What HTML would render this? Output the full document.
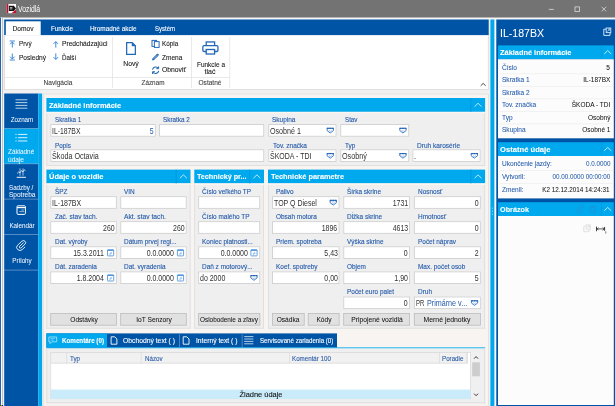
<!DOCTYPE html>
<html><head><meta charset="utf-8"><title>Vozidlá</title>
<style>
html,body{margin:0;padding:0;}
body{filter:blur(0.3px);width:615px;height:406px;position:relative;overflow:hidden;background:#f0f0f0;font-family:"Liberation Sans",sans-serif;}
body>div{position:absolute;white-space:nowrap;}
body>svg{position:absolute;left:0;top:0;display:block;}
</style></head><body>
<svg width="615" height="406" viewBox="0 0 615 406">
<rect x="0" y="0" width="615" height="406" fill="#f0f0f0"/>
<rect x="0" y="0" width="615" height="17.7" fill="#737373"/>
<rect x="0" y="17.7" width="615" height="1.8" fill="#f6f6f6"/>
<rect x="0" y="17.7" width="1" height="389" fill="#1f63b0"/>
<rect x="1" y="17.7" width="1" height="389" fill="#fafafa"/>
<rect x="2" y="17.7" width="1.3" height="389" fill="#c6c2bf"/>
<rect x="3.3" y="17.7" width="1" height="389" fill="#f6f6f6"/>
<g transform="translate(6.8 4)"><rect x="0" y="0" width="9.2" height="9.2" fill="#fff"/><rect x="0" y="0" width="1.5" height="9.2" fill="#c8102e"/><path d="M2 1.8h5l2.2 2.6-2.2 2.6H2z" fill="#111"/><path d="M4.6 9.2l4.6-3.8v3.8z" fill="#c8102e"/><path d="M3 3.6h2.6M3 4.9h2.6" stroke="#fff" stroke-width="0.7"/></g>
<g transform="translate(546 4)"><path d="M2.8 5.4h5" stroke="#dcdcdc" stroke-width="0.8"/><rect x="29" y="2.9" width="4.5" height="4.5" fill="none" stroke="#dcdcdc" stroke-width="0.8"/><path d="M55.6 2.8l4.6 4.6m0-4.6l-4.6 4.6" stroke="#dcdcdc" stroke-width="0.8"/></g>
<rect x="4.2" y="19.5" width="484.5" height="15.8" fill="#0054a6"/>
<rect x="4.2" y="35.3" width="484.5" height="54.6" fill="#fff"/>
<rect x="4.2" y="89.1" width="484.5" height="0.8" fill="#d9d9d9"/>
<rect x="4.2" y="35.3" width="0.8" height="54.6" fill="#d9d9d9"/>
<rect x="487.9" y="35.3" width="0.8" height="54.6" fill="#d9d9d9"/>
<rect x="5.8" y="21.3" width="34.9" height="14.2" fill="#fff"/>
<rect x="5" y="77" width="224.5" height="0.8" fill="#e4e4e4"/>
<rect x="112" y="37" width="0.8" height="51" fill="#e4e4e4"/>
<rect x="191" y="37" width="0.8" height="51" fill="#e4e4e4"/>
<rect x="229.4" y="37" width="0.8" height="51" fill="#e4e4e4"/>
<g transform="translate(9.5 40.5)"><g><path d="M0.2 0.5h5.2" stroke="#3584d2" stroke-width="0.95"/><path d="M2.8 7V1.5M0.5 3.8L2.8 1.5l2.3 2.3" fill="none" stroke="#3584d2" stroke-width="0.95"/></g></g>
<g transform="translate(9.5 53.5)"><g transform="rotate(180 2.8 3.5)"><path d="M0.2 0.5h5.2" stroke="#3584d2" stroke-width="0.95"/><path d="M2.8 7V1.5M0.5 3.8L2.8 1.5l2.3 2.3" fill="none" stroke="#3584d2" stroke-width="0.95"/></g></g>
<g transform="translate(53 40.7)"><g><path d="M2.8 6.9V0.9M0.5 3.2L2.8 0.9l2.3 2.3" fill="none" stroke="#3584d2" stroke-width="0.95"/></g></g>
<g transform="translate(53 53.3)"><g transform="rotate(180 2.8 3.5)"><path d="M2.8 6.9V0.9M0.5 3.2L2.8 0.9l2.3 2.3" fill="none" stroke="#3584d2" stroke-width="0.95"/></g></g>
<g transform="translate(126 41.9)"><path d="M0.65 0.65h5.5l3.2 3.2v8.5H0.65z" fill="#fff" stroke="#2368b8" stroke-width="1.25"/><path d="M6 0.6v3.4h3.4z" fill="#2368b8" stroke="#2368b8" stroke-width="0.5"/></g>
<g transform="translate(151.5 39.9)"><rect x="0.5" y="0.5" width="4.6" height="6" fill="none" stroke="#2368b8" stroke-width="1"/><rect x="2.9" y="1.7" width="4.7" height="5.8" fill="#fff" stroke="#2368b8" stroke-width="1"/></g>
<g transform="translate(151.6 52.9)"><path d="M1.9 6.1L6 2" stroke="#2368b8" stroke-width="2.3" stroke-linecap="round"/><path d="M2.2 5.8L5.7 2.3" stroke="#dbe8f6" stroke-width="0.7"/><path d="M0.5 7.5l0.5-1.9 1.4 1.4z" fill="#2368b8"/></g>
<g transform="translate(151.6 65.9)"><path d="M0.9 3.7A3.2 3.2 0 0 1 6.7 2.5M7.1 4.9A3.2 3.2 0 0 1 1.3 6.1" fill="none" stroke="#2368b8" stroke-width="1.1"/><path d="M7 0.5v2.3H4.7M1 8.1V5.8h2.3" fill="none" stroke="#2368b8" stroke-width="1"/></g>
<g transform="translate(202.2 41.3)"><rect x="4" y="0.65" width="8.4" height="3.8" fill="#fff" stroke="#2368b8" stroke-width="1.3"/><rect x="0.65" y="4.4" width="15.1" height="5.8" rx="1.2" fill="#fff" stroke="#2368b8" stroke-width="1.3"/><rect x="4" y="8.2" width="8.4" height="4.5" fill="#fff" stroke="#2368b8" stroke-width="1.3"/></g>
<g transform="translate(480.2 82.5)"><path d="M0.5 3.3L3 0.9l2.5 2.4" fill="none" stroke="#4a4a4a" stroke-width="1"/></g>
<rect x="4.2" y="93.5" width="34.1" height="312.5" fill="#0054a6"/>
<rect x="38.3" y="93.5" width="3.8" height="312.5" fill="#00a9ee"/>
<rect x="4.2" y="128.6" width="34.1" height="35.1" fill="#00a9ee"/>
<rect x="4.2" y="128.2" width="34.1" height="0.8" fill="#fff" opacity="0.42"/>
<rect x="4.2" y="163.4" width="34.1" height="0.8" fill="#fff" opacity="0.42"/>
<rect x="4.2" y="198.7" width="34.1" height="0.8" fill="#fff" opacity="0.42"/>
<rect x="4.2" y="234.2" width="34.1" height="0.8" fill="#fff" opacity="0.42"/>
<rect x="4.2" y="269.7" width="34.1" height="0.8" fill="#fff" opacity="0.42"/>
<g transform="translate(15.5 99.3)"><path d="M0 0.5h11.8M0 3.3h11.8M0 6.1h11.8M0 8.9h11.8" stroke="#fff" stroke-width="0.85" opacity="0.85"/></g>
<g transform="translate(15.1 133.4)"><path d="M3 1h9.2M3 4.3h9.2M3 7.6h9.2" stroke="#fff" stroke-width="1" opacity="0.85"/><path d="M0 1h2M0 4.3h2M0 7.6h2" stroke="#fff" stroke-width="0.9" opacity="0.6"/></g>
<g transform="translate(16.7 168)"><path d="M0 9.3h9.2" stroke="#fff" stroke-width="0.95"/><path d="M3.3 0.4v7.3M6.3 0.4v7.3" stroke="#fff" stroke-width="0.75" opacity="0.85"/><path d="M0.4 5.4l1.7-1.5 1.2 0.9 1.5-2.2 1.5 1.3 1.3-2.1 1.2 0.9" fill="none" stroke="#fff" stroke-width="0.75"/></g>
<g transform="translate(16.4 205)"><rect x="0.6" y="0.8" width="8.4" height="8.6" rx="1" fill="none" stroke="#fff" stroke-width="1"/><path d="M0.6 2.6h8.4" stroke="#fff" stroke-width="1.2"/><path d="M5 5h2.6M3 6.6h4.6" stroke="#fff" stroke-width="0.7" opacity="0.8"/></g>
<g transform="translate(16.3 240.2)"><path d="M7.6 3.2L3.6 7.3a1.1 1.1 0 0 0 1.6 1.6L9 5a2.2 2.2 0 0 0-3.2-3.2L1.6 6.1a3.3 3.3 0 0 0 4.7 4.7L9 8" fill="none" stroke="#fff" stroke-width="1" opacity="0.9" transform="translate(-0.3,-0.6) scale(1,0.92)"/></g>
<rect x="43.2" y="93.6" width="445.8" height="313" fill="#f8f4f1"/>
<rect x="43.65" y="94.05" width="444.9" height="312.1" fill="none" stroke="#e1e1e1" stroke-width="0.9"/>
<rect x="46.4" y="98" width="438.7" height="13.9" fill="#00a9ee"/>
<rect x="46.4" y="111.9" width="438.7" height="54.1" fill="#efefef"/>
<rect x="46.4" y="165.2" width="438.7" height="0.8" fill="#dcdcdc"/>
<rect x="46.4" y="111.9" width="0.8" height="54.1" fill="#dcdcdc"/>
<rect x="484.3" y="111.9" width="0.8" height="54.1" fill="#dcdcdc"/>
<rect x="46.4" y="111.9" width="438.7" height="1.4" fill="#fcf6f2"/>
<rect x="470.1" y="98" width="1.4" height="13.9" fill="#0095d8" opacity="0.55"/>
<g transform="translate(474 102.55)"><path d="M0.5 4.1L4 0.7l3.5 3.4" fill="none" stroke="#c9ecfb" stroke-width="0.95"/></g>
<rect x="50.4" y="124.1" width="105.4" height="12.6" fill="#fff"/>
<rect x="50.85" y="124.55" width="104.5" height="11.7" fill="none" stroke="#cfcfcf" stroke-width="0.9"/>
<rect x="159" y="124.1" width="105.2" height="12.6" fill="#fff"/>
<rect x="159.45" y="124.55" width="104.3" height="11.7" fill="none" stroke="#cfcfcf" stroke-width="0.9"/>
<rect x="268.3" y="124.1" width="68.2" height="12.6" fill="#fff"/>
<rect x="268.75" y="124.55" width="67.3" height="11.7" fill="none" stroke="#cfcfcf" stroke-width="0.9"/>
<g transform="translate(326.6 127.4)"><path d="M0.5 0.9h6.3v2.3L3.65 5.6 0.5 3.2z" fill="#fff" stroke="#2f6fc0" stroke-width="0.9" stroke-linejoin="round"/><path d="M0.2 1h6.9" stroke="#2464b4" stroke-width="1.3" stroke-dasharray="1.9 0.6"/><path d="M2.3 2.9l1.35 1.1 1.35-1.1" fill="none" stroke="#5d93d6" stroke-width="0.6"/></g>
<rect x="340.3" y="124.1" width="68.9" height="12.6" fill="#fff"/>
<rect x="340.75" y="124.55" width="68" height="11.7" fill="none" stroke="#cfcfcf" stroke-width="0.9"/>
<g transform="translate(399.3 127.4)"><path d="M0.5 0.9h6.3v2.3L3.65 5.6 0.5 3.2z" fill="#fff" stroke="#2f6fc0" stroke-width="0.9" stroke-linejoin="round"/><path d="M0.2 1h6.9" stroke="#2464b4" stroke-width="1.3" stroke-dasharray="1.9 0.6"/><path d="M2.3 2.9l1.35 1.1 1.35-1.1" fill="none" stroke="#5d93d6" stroke-width="0.6"/></g>
<rect x="50.4" y="149.3" width="213.8" height="12.6" fill="#fff"/>
<rect x="50.85" y="149.75" width="212.9" height="11.7" fill="none" stroke="#cfcfcf" stroke-width="0.9"/>
<rect x="268.3" y="149.3" width="68.2" height="12.6" fill="#fff"/>
<rect x="268.75" y="149.75" width="67.3" height="11.7" fill="none" stroke="#cfcfcf" stroke-width="0.9"/>
<g transform="translate(326.6 152.6)"><path d="M0.5 0.9h6.3v2.3L3.65 5.6 0.5 3.2z" fill="#fff" stroke="#2f6fc0" stroke-width="0.9" stroke-linejoin="round"/><path d="M0.2 1h6.9" stroke="#2464b4" stroke-width="1.3" stroke-dasharray="1.9 0.6"/><path d="M2.3 2.9l1.35 1.1 1.35-1.1" fill="none" stroke="#5d93d6" stroke-width="0.6"/></g>
<rect x="340.3" y="149.3" width="68.9" height="12.6" fill="#fff"/>
<rect x="340.75" y="149.75" width="68" height="11.7" fill="none" stroke="#cfcfcf" stroke-width="0.9"/>
<g transform="translate(399.3 152.6)"><path d="M0.5 0.9h6.3v2.3L3.65 5.6 0.5 3.2z" fill="#fff" stroke="#2f6fc0" stroke-width="0.9" stroke-linejoin="round"/><path d="M0.2 1h6.9" stroke="#2464b4" stroke-width="1.3" stroke-dasharray="1.9 0.6"/><path d="M2.3 2.9l1.35 1.1 1.35-1.1" fill="none" stroke="#5d93d6" stroke-width="0.6"/></g>
<rect x="412.4" y="149.3" width="68.2" height="12.6" fill="#fff"/>
<rect x="412.85" y="149.75" width="67.3" height="11.7" fill="none" stroke="#cfcfcf" stroke-width="0.9"/>
<g transform="translate(470.7 152.6)"><path d="M0.5 0.9h6.3v2.3L3.65 5.6 0.5 3.2z" fill="#fff" stroke="#2f6fc0" stroke-width="0.9" stroke-linejoin="round"/><path d="M0.2 1h6.9" stroke="#2464b4" stroke-width="1.3" stroke-dasharray="1.9 0.6"/><path d="M2.3 2.9l1.35 1.1 1.35-1.1" fill="none" stroke="#5d93d6" stroke-width="0.6"/></g>
<rect x="46.4" y="169.6" width="144.1" height="13.9" fill="#00a9ee"/>
<rect x="46.4" y="183.5" width="144.1" height="145.1" fill="#efefef"/>
<rect x="46.4" y="327.8" width="144.1" height="0.8" fill="#dcdcdc"/>
<rect x="46.4" y="183.5" width="0.8" height="145.1" fill="#dcdcdc"/>
<rect x="189.7" y="183.5" width="0.8" height="145.1" fill="#dcdcdc"/>
<rect x="46.4" y="183.5" width="144.1" height="1.4" fill="#fcf6f2"/>
<rect x="175.5" y="169.6" width="1.4" height="13.9" fill="#0095d8" opacity="0.55"/>
<g transform="translate(179.4 174.15)"><path d="M0.5 4.1L4 0.7l3.5 3.4" fill="none" stroke="#c9ecfb" stroke-width="0.95"/></g>
<rect x="50.3" y="196.2" width="66.5" height="12.6" fill="#fff"/>
<rect x="50.75" y="196.65" width="65.6" height="11.7" fill="none" stroke="#cfcfcf" stroke-width="0.9"/>
<rect x="120.3" y="196.2" width="66.4" height="12.6" fill="#fff"/>
<rect x="120.75" y="196.65" width="65.5" height="11.7" fill="none" stroke="#cfcfcf" stroke-width="0.9"/>
<rect x="50.3" y="221.2" width="66.5" height="12.6" fill="#fff"/>
<rect x="50.75" y="221.65" width="65.6" height="11.7" fill="none" stroke="#cfcfcf" stroke-width="0.9"/>
<rect x="120.3" y="221.2" width="66.4" height="12.6" fill="#fff"/>
<rect x="120.75" y="221.65" width="65.5" height="11.7" fill="none" stroke="#cfcfcf" stroke-width="0.9"/>
<rect x="50.3" y="246.3" width="66.5" height="12.6" fill="#fff"/>
<rect x="50.75" y="246.75" width="65.6" height="11.7" fill="none" stroke="#cfcfcf" stroke-width="0.9"/>
<g transform="translate(107 248.9)"><rect x="0.5" y="0.8" width="6.2" height="6.2" rx="0.5" fill="#fff" stroke="#5596da" stroke-width="0.9"/><path d="M0.5 1.5h6.2" stroke="#5596da" stroke-width="1.1"/><path d="M2.6 4.6h2.4M3.4 3.5h1.4M2.4 5.7h1.4" stroke="#5596da" stroke-width="0.6" opacity="0.9"/></g>
<rect x="120.3" y="246.3" width="66.4" height="12.6" fill="#fff"/>
<rect x="120.75" y="246.75" width="65.5" height="11.7" fill="none" stroke="#cfcfcf" stroke-width="0.9"/>
<g transform="translate(176.9 248.9)"><rect x="0.5" y="0.8" width="6.2" height="6.2" rx="0.5" fill="#fff" stroke="#5596da" stroke-width="0.9"/><path d="M0.5 1.5h6.2" stroke="#5596da" stroke-width="1.1"/><path d="M2.6 4.6h2.4M3.4 3.5h1.4M2.4 5.7h1.4" stroke="#5596da" stroke-width="0.6" opacity="0.9"/></g>
<rect x="50.3" y="271.4" width="66.5" height="12.6" fill="#fff"/>
<rect x="50.75" y="271.85" width="65.6" height="11.7" fill="none" stroke="#cfcfcf" stroke-width="0.9"/>
<g transform="translate(107 274)"><rect x="0.5" y="0.8" width="6.2" height="6.2" rx="0.5" fill="#fff" stroke="#5596da" stroke-width="0.9"/><path d="M0.5 1.5h6.2" stroke="#5596da" stroke-width="1.1"/><path d="M2.6 4.6h2.4M3.4 3.5h1.4M2.4 5.7h1.4" stroke="#5596da" stroke-width="0.6" opacity="0.9"/></g>
<rect x="120.3" y="271.4" width="66.4" height="12.6" fill="#fff"/>
<rect x="120.75" y="271.85" width="65.5" height="11.7" fill="none" stroke="#cfcfcf" stroke-width="0.9"/>
<g transform="translate(176.9 274)"><rect x="0.5" y="0.8" width="6.2" height="6.2" rx="0.5" fill="#fff" stroke="#5596da" stroke-width="0.9"/><path d="M0.5 1.5h6.2" stroke="#5596da" stroke-width="1.1"/><path d="M2.6 4.6h2.4M3.4 3.5h1.4M2.4 5.7h1.4" stroke="#5596da" stroke-width="0.6" opacity="0.9"/></g>
<rect x="50.3" y="313" width="66.5" height="12.6" fill="#e1e1e1"/>
<rect x="50.7" y="313.4" width="65.7" height="11.8" fill="none" stroke="#bebebe" stroke-width="0.8"/>
<rect x="120.3" y="313" width="66.4" height="12.6" fill="#e1e1e1"/>
<rect x="120.7" y="313.4" width="65.6" height="11.8" fill="none" stroke="#bebebe" stroke-width="0.8"/>
<rect x="194.3" y="169.6" width="69.7" height="13.9" fill="#00a9ee"/>
<rect x="194.3" y="183.5" width="69.7" height="145.1" fill="#efefef"/>
<rect x="194.3" y="327.8" width="69.7" height="0.8" fill="#dcdcdc"/>
<rect x="194.3" y="183.5" width="0.8" height="145.1" fill="#dcdcdc"/>
<rect x="263.2" y="183.5" width="0.8" height="145.1" fill="#dcdcdc"/>
<rect x="194.3" y="183.5" width="69.7" height="1.4" fill="#fcf6f2"/>
<rect x="249" y="169.6" width="1.4" height="13.9" fill="#0095d8" opacity="0.55"/>
<g transform="translate(252.9 174.15)"><path d="M0.5 4.1L4 0.7l3.5 3.4" fill="none" stroke="#c9ecfb" stroke-width="0.95"/></g>
<rect x="198.2" y="196.2" width="62" height="12.6" fill="#fff"/>
<rect x="198.65" y="196.65" width="61.1" height="11.7" fill="none" stroke="#cfcfcf" stroke-width="0.9"/>
<rect x="198.2" y="221.2" width="62" height="12.6" fill="#fff"/>
<rect x="198.65" y="221.65" width="61.1" height="11.7" fill="none" stroke="#cfcfcf" stroke-width="0.9"/>
<rect x="198.2" y="246.3" width="62" height="12.6" fill="#fff"/>
<rect x="198.65" y="246.75" width="61.1" height="11.7" fill="none" stroke="#cfcfcf" stroke-width="0.9"/>
<g transform="translate(250.4 248.9)"><rect x="0.5" y="0.8" width="6.2" height="6.2" rx="0.5" fill="#fff" stroke="#5596da" stroke-width="0.9"/><path d="M0.5 1.5h6.2" stroke="#5596da" stroke-width="1.1"/><path d="M2.6 4.6h2.4M3.4 3.5h1.4M2.4 5.7h1.4" stroke="#5596da" stroke-width="0.6" opacity="0.9"/></g>
<rect x="198.2" y="271.4" width="62" height="12.6" fill="#fff"/>
<rect x="198.65" y="271.85" width="61.1" height="11.7" fill="none" stroke="#cfcfcf" stroke-width="0.9"/>
<g transform="translate(250.3 274.7)"><path d="M0.5 0.9h6.3v2.3L3.65 5.6 0.5 3.2z" fill="#fff" stroke="#2f6fc0" stroke-width="0.9" stroke-linejoin="round"/><path d="M0.2 1h6.9" stroke="#2464b4" stroke-width="1.3" stroke-dasharray="1.9 0.6"/><path d="M2.3 2.9l1.35 1.1 1.35-1.1" fill="none" stroke="#5d93d6" stroke-width="0.6"/></g>
<rect x="198.2" y="313" width="62" height="12.6" fill="#e1e1e1"/>
<rect x="198.6" y="313.4" width="61.2" height="11.8" fill="none" stroke="#bebebe" stroke-width="0.8"/>
<rect x="268" y="169.6" width="217.1" height="13.9" fill="#00a9ee"/>
<rect x="268" y="183.5" width="217.1" height="145.1" fill="#efefef"/>
<rect x="268" y="327.8" width="217.1" height="0.8" fill="#dcdcdc"/>
<rect x="268" y="183.5" width="0.8" height="145.1" fill="#dcdcdc"/>
<rect x="484.3" y="183.5" width="0.8" height="145.1" fill="#dcdcdc"/>
<rect x="268" y="183.5" width="217.1" height="1.4" fill="#fcf6f2"/>
<rect x="470.1" y="169.6" width="1.4" height="13.9" fill="#0095d8" opacity="0.55"/>
<g transform="translate(474 174.15)"><path d="M0.5 4.1L4 0.7l3.5 3.4" fill="none" stroke="#c9ecfb" stroke-width="0.95"/></g>
<rect x="272.1" y="196.2" width="67.4" height="12.6" fill="#fff"/>
<rect x="272.55" y="196.65" width="66.5" height="11.7" fill="none" stroke="#cfcfcf" stroke-width="0.9"/>
<g transform="translate(329.6 199.5)"><path d="M0.5 0.9h6.3v2.3L3.65 5.6 0.5 3.2z" fill="#fff" stroke="#2f6fc0" stroke-width="0.9" stroke-linejoin="round"/><path d="M0.2 1h6.9" stroke="#2464b4" stroke-width="1.3" stroke-dasharray="1.9 0.6"/><path d="M2.3 2.9l1.35 1.1 1.35-1.1" fill="none" stroke="#5d93d6" stroke-width="0.6"/></g>
<rect x="272.1" y="221.2" width="67.4" height="12.6" fill="#fff"/>
<rect x="272.55" y="221.65" width="66.5" height="11.7" fill="none" stroke="#cfcfcf" stroke-width="0.9"/>
<rect x="272.1" y="246.3" width="67.4" height="12.6" fill="#fff"/>
<rect x="272.55" y="246.75" width="66.5" height="11.7" fill="none" stroke="#cfcfcf" stroke-width="0.9"/>
<rect x="272.1" y="271.4" width="67.4" height="12.6" fill="#fff"/>
<rect x="272.55" y="271.85" width="66.5" height="11.7" fill="none" stroke="#cfcfcf" stroke-width="0.9"/>
<rect x="343.3" y="196.2" width="66.7" height="12.6" fill="#fff"/>
<rect x="343.75" y="196.65" width="65.8" height="11.7" fill="none" stroke="#cfcfcf" stroke-width="0.9"/>
<rect x="343.3" y="221.2" width="66.7" height="12.6" fill="#fff"/>
<rect x="343.75" y="221.65" width="65.8" height="11.7" fill="none" stroke="#cfcfcf" stroke-width="0.9"/>
<rect x="343.3" y="246.3" width="66.7" height="12.6" fill="#fff"/>
<rect x="343.75" y="246.75" width="65.8" height="11.7" fill="none" stroke="#cfcfcf" stroke-width="0.9"/>
<rect x="343.3" y="271.4" width="66.7" height="12.6" fill="#fff"/>
<rect x="343.75" y="271.85" width="65.8" height="11.7" fill="none" stroke="#cfcfcf" stroke-width="0.9"/>
<rect x="343.3" y="296.5" width="66.7" height="12.6" fill="#fff"/>
<rect x="343.75" y="296.95" width="65.8" height="11.7" fill="none" stroke="#cfcfcf" stroke-width="0.9"/>
<rect x="413.9" y="196.2" width="66.9" height="12.6" fill="#fff"/>
<rect x="414.35" y="196.65" width="66" height="11.7" fill="none" stroke="#cfcfcf" stroke-width="0.9"/>
<rect x="413.9" y="221.2" width="66.9" height="12.6" fill="#fff"/>
<rect x="414.35" y="221.65" width="66" height="11.7" fill="none" stroke="#cfcfcf" stroke-width="0.9"/>
<rect x="413.9" y="246.3" width="66.9" height="12.6" fill="#fff"/>
<rect x="414.35" y="246.75" width="66" height="11.7" fill="none" stroke="#cfcfcf" stroke-width="0.9"/>
<rect x="413.9" y="271.4" width="66.9" height="12.6" fill="#fff"/>
<rect x="414.35" y="271.85" width="66" height="11.7" fill="none" stroke="#cfcfcf" stroke-width="0.9"/>
<rect x="413.9" y="296.5" width="66.9" height="12.6" fill="#fff"/>
<rect x="414.35" y="296.95" width="66" height="11.7" fill="none" stroke="#cfcfcf" stroke-width="0.9"/>
<g transform="translate(470.9 299.8)"><path d="M0.5 0.9h6.3v2.3L3.65 5.6 0.5 3.2z" fill="#fff" stroke="#2f6fc0" stroke-width="0.9" stroke-linejoin="round"/><path d="M0.2 1h6.9" stroke="#2464b4" stroke-width="1.3" stroke-dasharray="1.9 0.6"/><path d="M2.3 2.9l1.35 1.1 1.35-1.1" fill="none" stroke="#5d93d6" stroke-width="0.6"/></g>
<rect x="272.1" y="313" width="32.5" height="12.6" fill="#e1e1e1"/>
<rect x="272.5" y="313.4" width="31.7" height="11.8" fill="none" stroke="#bebebe" stroke-width="0.8"/>
<rect x="307.8" y="313" width="31.7" height="12.6" fill="#e1e1e1"/>
<rect x="308.2" y="313.4" width="30.9" height="11.8" fill="none" stroke="#bebebe" stroke-width="0.8"/>
<rect x="343.3" y="313" width="66.7" height="12.6" fill="#e1e1e1"/>
<rect x="343.7" y="313.4" width="65.9" height="11.8" fill="none" stroke="#bebebe" stroke-width="0.8"/>
<rect x="413.9" y="313" width="66.9" height="12.6" fill="#e1e1e1"/>
<rect x="414.3" y="313.4" width="66.1" height="11.8" fill="none" stroke="#bebebe" stroke-width="0.8"/>
<rect x="46.4" y="333.4" width="290.6" height="14.2" fill="#0054a6"/>
<rect x="46.4" y="333.4" width="60.6" height="14.2" fill="#00a9ee"/>
<rect x="46.4" y="347.4" width="438.7" height="1.1" fill="#00a9ee"/>
<rect x="179.4" y="334.5" width="0.6" height="12.5" fill="#fff" opacity="0.5"/>
<rect x="241.8" y="334.5" width="0.6" height="12.5" fill="#fff" opacity="0.5"/>
<g transform="translate(48.4 336.4)"><path d="M0.5 0.6h7.8v4.8H3.4L1.7 7.2V5.4H0.5z" fill="none" stroke="#b5e3fa" stroke-width="0.8"/><path d="M2.2 2.3h4.4M2.2 3.8h3" stroke="#b5e3fa" stroke-width="0.6"/></g>
<g transform="translate(110.5 336.2)"><path d="M0.6 0.6h3.6l2.2 2.2v5.2H0.6z" fill="none" stroke="#fff" stroke-width="0.9"/></g>
<g transform="translate(182.6 336.2)"><path d="M0.6 0.6h3.6l2.2 2.2v5.2H0.6z" fill="none" stroke="#fff" stroke-width="0.9"/></g>
<g transform="translate(244.2 335.9)"><path d="M0 0.7h9.2M0 3.1h9.2M0 5.5h9.2M0 7.9h9.2" stroke="#cfe0f3" stroke-width="0.85"/></g>
<rect x="46.4" y="348.5" width="438.7" height="54.8" fill="#efefef"/>
<rect x="46.4" y="402.5" width="438.7" height="0.8" fill="#dadada"/>
<rect x="46.4" y="348.5" width="0.8" height="54.8" fill="#dadada"/>
<rect x="484.3" y="348.5" width="0.8" height="54.8" fill="#dadada"/>
<rect x="50.3" y="352.2" width="420.7" height="47" fill="#fff"/>
<rect x="50.7" y="352.6" width="419.9" height="46.2" fill="none" stroke="#dadada" stroke-width="0.8"/>
<rect x="50.3" y="352.2" width="417" height="11.3" fill="#f1f1f1"/>
<rect x="50.7" y="352.6" width="416.2" height="10.5" fill="none" stroke="#dadada" stroke-width="0.8"/>
<rect x="66.4" y="352.2" width="0.7" height="11.3" fill="#dadada"/>
<rect x="140.8" y="352.2" width="0.7" height="11.3" fill="#dadada"/>
<rect x="289.3" y="352.2" width="0.7" height="11.3" fill="#dadada"/>
<rect x="439" y="352.2" width="0.7" height="11.3" fill="#dadada"/>
<rect x="467" y="352.2" width="0.7" height="11.3" fill="#dadada"/>
<rect x="50.8" y="389.6" width="419.8" height="9.4" fill="#c9ebfa"/>
<rect x="471" y="352.2" width="11.3" height="47" fill="#f0f0f0"/>
<rect x="472.2" y="362.3" width="7.7" height="14" fill="#cdcdcd"/>
<g transform="translate(473.6 355.6)"><path d="M0.5 3L2.5 1l2 2" fill="none" stroke="#333" stroke-width="1"/></g>
<g transform="translate(473.6 393.2)"><path d="M0.5 0.5L2.5 2.5l2-2" fill="none" stroke="#333" stroke-width="1"/></g>
<rect x="0" y="405" width="1" height="1" fill="#ff0000"/>
<rect x="1" y="405" width="1" height="1" fill="#00ff00"/>
<rect x="2" y="405" width="1" height="1" fill="#0000ff"/>
<rect x="490.4" y="19.5" width="4.2" height="386.5" fill="#00a9ee"/>
<rect x="494.6" y="19.5" width="1.7" height="386.5" fill="#fff"/>
<rect x="491.9" y="207.5" width="0.9" height="1.3" fill="#fff" opacity="0.55"/>
<rect x="491.9" y="210.5" width="0.9" height="1.3" fill="#fff" opacity="0.55"/>
<rect x="491.9" y="213.5" width="0.9" height="1.3" fill="#fff" opacity="0.55"/>
<rect x="496.3" y="19.5" width="118.7" height="386.5" fill="#0054a6"/>
<g transform="translate(603 27.4)"><path d="M3.2 1.8H0.8v6.2h6.2V5.6" fill="none" stroke="#cfe3f7" stroke-width="1"/><rect x="3.2" y="0.6" width="4.6" height="4.6" fill="none" stroke="#cfe3f7" stroke-width="0.9"/><path d="M4.3 4.1L6.8 1.6M5 1.5h1.9v1.9" fill="none" stroke="#cfe3f7" stroke-width="0.8"/></g>
<rect x="498" y="45.4" width="115.8" height="13.8" fill="#00a9ee"/>
<rect x="600.8" y="45.4" width="1.4" height="13.8" fill="#0095d8" opacity="0.55"/>
<g transform="translate(603.7 49.9)"><path d="M0.5 4.1L4 0.7l3.5 3.4" fill="none" stroke="#c9ecfb" stroke-width="0.95"/></g>
<rect x="498" y="59.2" width="115.8" height="79.1" fill="#fcfcfc"/>
<rect x="499.5" y="73.5" width="112.8" height="0.6" fill="#ebebeb"/>
<rect x="499.5" y="86.03" width="112.8" height="0.6" fill="#ebebeb"/>
<rect x="499.5" y="98.56" width="112.8" height="0.6" fill="#ebebeb"/>
<rect x="499.5" y="111.09" width="112.8" height="0.6" fill="#ebebeb"/>
<rect x="499.5" y="123.62" width="112.8" height="0.6" fill="#ebebeb"/>
<rect x="498" y="142.2" width="115.8" height="13.8" fill="#00a9ee"/>
<rect x="600.8" y="142.2" width="1.4" height="13.8" fill="#0095d8" opacity="0.55"/>
<g transform="translate(603.7 146.7)"><path d="M0.5 4.1L4 0.7l3.5 3.4" fill="none" stroke="#c9ecfb" stroke-width="0.95"/></g>
<rect x="498" y="156" width="115.8" height="42.4" fill="#fcfcfc"/>
<rect x="499.5" y="170.1" width="112.8" height="0.6" fill="#ebebeb"/>
<rect x="499.5" y="183.2" width="112.8" height="0.6" fill="#ebebeb"/>
<rect x="498" y="202.2" width="115.8" height="13.8" fill="#00a9ee"/>
<rect x="600.8" y="202.2" width="1.4" height="13.8" fill="#0095d8" opacity="0.55"/>
<g transform="translate(603.7 206.7)"><path d="M0.5 4.1L4 0.7l3.5 3.4" fill="none" stroke="#c9ecfb" stroke-width="0.95"/></g>
<rect x="498" y="216" width="115.8" height="189" fill="#fcfcfc"/>
<g transform="translate(576.3 204.6)"><path d="M7.6 3.2L3.6 7.3a1.1 1.1 0 0 0 1.6 1.6L9 5a2.2 2.2 0 0 0-3.2-3.2L1.6 6.1a3.3 3.3 0 0 0 4.7 4.7L9 8" fill="none" stroke="#1797d6" stroke-width="1.1" opacity="0.9" transform="translate(-0.6,-0.8) scale(0.84,0.8)"/></g>
<g transform="translate(589.8 205)"><path d="M0.9 2.2h4.8v5.6H0.9zM0 2h6.6M2.2 0.8h2.2" fill="none" stroke="#1797d6" stroke-width="0.9" opacity="0.9"/><path d="M2.5 3.4v3.2M4.1 3.4v3.2" stroke="#1797d6" stroke-width="0.5" opacity="0.8"/></g>
<g transform="translate(583.3 224.4)"><path d="M2.8 1.9H0.5v5.4h5.4V5" fill="none" stroke="#d6d6d6" stroke-width="0.7"/><rect x="2.8" y="0.5" width="4.3" height="4.3" fill="none" stroke="#d8d8d8" stroke-width="0.7"/><path d="M3.7 3.9L6 1.6M4.4 1.5h1.7v1.7" fill="none" stroke="#d4d4d4" stroke-width="0.7"/></g>
<g transform="translate(596 226.3)"><path d="M0.5 0.3v4.6M8.6 0.6v4" stroke="#222" stroke-width="0.85"/><path d="M0.6 2.6h8M6.6 1.1l1.6 1.5-1.6 1.5M2.4 1.3L1.1 2.6l1.3 1.3" fill="none" stroke="#222" stroke-width="0.7"/><path d="M9.8 5v2.4" stroke="#333" stroke-width="0.6"/></g>
</svg>
<div style="top:4px;font-size:8.2px;line-height:11.5px;color:#fff;left:18.3px;transform-origin:0 50%;transform:scaleX(0.840);">Vozidlá</div>
<div style="top:24px;font-size:7px;line-height:9.8px;color:#222;left:-76.8px;width:200px;text-align:center;transform-origin:50% 50%;transform:scaleX(0.947);-webkit-text-stroke:0.1px #222;">Domov</div>
<div style="top:24px;font-size:7px;line-height:9.8px;color:#fff;left:51px;transform-origin:0 50%;transform:scaleX(0.898);-webkit-text-stroke:0.1px #fff;">Funkcie</div>
<div style="top:24px;font-size:7px;line-height:9.8px;color:#fff;left:90.4px;transform-origin:0 50%;transform:scaleX(0.914);-webkit-text-stroke:0.1px #fff;">Hromadné akcie</div>
<div style="top:24px;font-size:7px;line-height:9.8px;color:#fff;left:154.7px;transform-origin:0 50%;transform:scaleX(0.857);-webkit-text-stroke:0.1px #fff;">Systém</div>
<div style="top:78px;font-size:6.8px;line-height:9.5px;color:#444;left:-42px;width:200px;text-align:center;transform-origin:50% 50%;transform:scaleX(0.971);-webkit-text-stroke:0.1px #444;">Navigácia</div>
<div style="top:78px;font-size:6.8px;line-height:9.5px;color:#444;left:52.5px;width:200px;text-align:center;transform-origin:50% 50%;transform:scaleX(0.936);-webkit-text-stroke:0.1px #444;">Záznam</div>
<div style="top:78px;font-size:6.8px;line-height:9.5px;color:#444;left:110.3px;width:200px;text-align:center;transform-origin:50% 50%;transform:scaleX(0.966);-webkit-text-stroke:0.1px #444;">Ostatné</div>
<div style="top:40px;font-size:7.1px;line-height:9.9px;color:#1a1a1a;left:19.3px;transform-origin:0 50%;transform:scaleX(0.887);-webkit-text-stroke:0.1px #1a1a1a;">Prvý</div>
<div style="top:54px;font-size:7.1px;line-height:9.9px;color:#1a1a1a;left:19.3px;transform-origin:0 50%;transform:scaleX(0.924);-webkit-text-stroke:0.1px #1a1a1a;">Posledný</div>
<div style="top:40px;font-size:7.1px;line-height:9.9px;color:#1a1a1a;left:62.3px;transform-origin:0 50%;transform:scaleX(0.939);-webkit-text-stroke:0.1px #1a1a1a;">Predchádzajúci</div>
<div style="top:54px;font-size:7.1px;line-height:9.9px;color:#1a1a1a;left:62.3px;transform-origin:0 50%;transform:scaleX(0.878);-webkit-text-stroke:0.1px #1a1a1a;">Ďalší</div>
<div style="top:60px;font-size:7.1px;line-height:9.9px;color:#1a1a1a;left:31px;width:200px;text-align:center;transform-origin:50% 50%;transform:scaleX(0.964);-webkit-text-stroke:0.1px #1a1a1a;">Nový</div>
<div style="top:40px;font-size:7.1px;line-height:9.9px;color:#1a1a1a;left:162.2px;transform-origin:0 50%;transform:scaleX(0.898);-webkit-text-stroke:0.1px #1a1a1a;">Kópia</div>
<div style="top:54px;font-size:7.1px;line-height:9.9px;color:#1a1a1a;left:162px;transform-origin:0 50%;transform:scaleX(0.923);-webkit-text-stroke:0.1px #1a1a1a;">Zmena</div>
<div style="top:66px;font-size:7.1px;line-height:9.9px;color:#1a1a1a;left:162.2px;transform-origin:0 50%;transform:scaleX(0.958);-webkit-text-stroke:0.1px #1a1a1a;">Obnoviť</div>
<div style="top:61px;font-size:7.1px;line-height:9.9px;color:#1a1a1a;left:110.6px;width:200px;text-align:center;transform-origin:50% 50%;transform:scaleX(0.910);-webkit-text-stroke:0.1px #1a1a1a;">Funkcie a</div>
<div style="top:68px;font-size:7.1px;line-height:9.9px;color:#1a1a1a;left:110.1px;width:200px;text-align:center;transform-origin:50% 50%;transform:scaleX(0.987);-webkit-text-stroke:0.1px #1a1a1a;">tlač</div>
<div style="top:115px;font-size:6.8px;line-height:9.5px;color:#f4f8fd;left:-78.5px;width:200px;text-align:center;transform-origin:50% 50%;transform:scaleX(0.920);-webkit-text-stroke:0.03px #f4f8fd;">Zoznam</div>
<div style="top:147px;font-size:6.8px;line-height:9.5px;color:#f4f8fd;left:8.4px;transform-origin:0 50%;transform:scaleX(0.937);-webkit-text-stroke:0.03px #f4f8fd;">Základné</div>
<div style="top:155px;font-size:6.8px;line-height:9.5px;color:#f4f8fd;left:8.4px;transform-origin:0 50%;transform:scaleX(0.962);-webkit-text-stroke:0.03px #f4f8fd;">údaje</div>
<div style="top:183px;font-size:6.8px;line-height:9.5px;color:#f4f8fd;left:8.6px;transform-origin:0 50%;transform:scaleX(0.915);-webkit-text-stroke:0.03px #f4f8fd;">Sadzby /</div>
<div style="top:190px;font-size:6.8px;line-height:9.5px;color:#f4f8fd;left:8.6px;transform-origin:0 50%;transform:scaleX(0.957);-webkit-text-stroke:0.03px #f4f8fd;">Spotreba</div>
<div style="top:221px;font-size:6.8px;line-height:9.5px;color:#f4f8fd;left:-78.5px;width:200px;text-align:center;transform-origin:50% 50%;transform:scaleX(0.926);-webkit-text-stroke:0.03px #f4f8fd;">Kalendár</div>
<div style="top:256px;font-size:6.8px;line-height:9.5px;color:#f4f8fd;left:-78.2px;width:200px;text-align:center;transform-origin:50% 50%;transform:scaleX(0.917);-webkit-text-stroke:0.03px #f4f8fd;">Prílohy</div>
<div style="top:100px;font-size:8px;line-height:11.2px;color:#fff;font-weight:bold;left:48.9px;transform-origin:0 50%;transform:scaleX(0.931);-webkit-text-stroke:0.1px #fff;">Základné informácie</div>
<div style="top:115px;font-size:7.4px;line-height:10.4px;color:#2259aa;left:54.6px;transform-origin:0 50%;transform:scaleX(0.838);-webkit-text-stroke:0.12px #2259aa;">Skratka 1</div>
<div style="top:126px;font-size:8.2px;line-height:11.5px;color:#303030;left:52px;transform-origin:0 50%;transform:scaleX(0.834);">IL-187BX</div>
<div style="top:126px;font-size:8.2px;line-height:11.5px;color:#2259aa;right:461.6px;transform-origin:100% 50%;transform:scaleX(0.854);">5</div>
<div style="top:115px;font-size:7.4px;line-height:10.4px;color:#2259aa;left:163.1px;transform-origin:0 50%;transform:scaleX(0.861);-webkit-text-stroke:0.12px #2259aa;">Skratka 2</div>
<div style="top:115px;font-size:7.4px;line-height:10.4px;color:#2259aa;left:272.1px;transform-origin:0 50%;transform:scaleX(0.875);-webkit-text-stroke:0.12px #2259aa;">Skupina</div>
<div style="top:126px;font-size:8.2px;line-height:11.5px;color:#303030;left:269.9px;transform-origin:0 50%;transform:scaleX(0.872);">Osobné 1</div>
<div style="top:115px;font-size:7.4px;line-height:10.4px;color:#2259aa;left:344.5px;transform-origin:0 50%;transform:scaleX(0.837);-webkit-text-stroke:0.12px #2259aa;">Stav</div>
<div style="top:141px;font-size:7.4px;line-height:10.4px;color:#2259aa;left:54.6px;transform-origin:0 50%;transform:scaleX(0.859);-webkit-text-stroke:0.12px #2259aa;">Popis</div>
<div style="top:151px;font-size:8.2px;line-height:11.5px;color:#303030;left:52px;transform-origin:0 50%;transform:scaleX(0.879);">Škoda Octavia</div>
<div style="top:141px;font-size:7.4px;line-height:10.4px;color:#2259aa;left:272.5px;transform-origin:0 50%;transform:scaleX(0.883);-webkit-text-stroke:0.12px #2259aa;">Tov. značka</div>
<div style="top:151px;font-size:8.2px;line-height:11.5px;color:#303030;left:269.9px;transform-origin:0 50%;transform:scaleX(0.854);">ŠKODA - TDI</div>
<div style="top:141px;font-size:7.4px;line-height:10.4px;color:#2259aa;left:344.5px;transform-origin:0 50%;transform:scaleX(0.864);-webkit-text-stroke:0.12px #2259aa;">Typ</div>
<div style="top:151px;font-size:8.2px;line-height:11.5px;color:#303030;left:341.9px;transform-origin:0 50%;transform:scaleX(0.878);">Osobný</div>
<div style="top:141px;font-size:7.4px;line-height:10.4px;color:#2259aa;left:416.8px;transform-origin:0 50%;transform:scaleX(0.888);-webkit-text-stroke:0.12px #2259aa;">Druh karosérie</div>
<div style="top:151px;font-size:8.2px;line-height:11.5px;color:#303030;left:414px;transform-origin:0 50%;transform:scaleX(0.854);">.</div>
<div style="top:171px;font-size:8px;line-height:11.2px;color:#fff;font-weight:bold;left:48.9px;transform-origin:0 50%;transform:scaleX(0.936);-webkit-text-stroke:0.1px #fff;">Údaje o vozidle</div>
<div style="top:187px;font-size:7.4px;line-height:10.4px;color:#2259aa;left:54.8px;transform-origin:0 50%;transform:scaleX(0.872);-webkit-text-stroke:0.12px #2259aa;">ŠPZ</div>
<div style="top:198px;font-size:8.2px;line-height:11.5px;color:#303030;left:51.9px;transform-origin:0 50%;transform:scaleX(0.854);">IL-187BX</div>
<div style="top:187px;font-size:7.4px;line-height:10.4px;color:#2259aa;left:124.4px;transform-origin:0 50%;transform:scaleX(0.872);-webkit-text-stroke:0.12px #2259aa;">VIN</div>
<div style="top:212px;font-size:7.4px;line-height:10.4px;color:#2259aa;left:54.8px;transform-origin:0 50%;transform:scaleX(0.881);-webkit-text-stroke:0.12px #2259aa;">Zač. stav tach.</div>
<div style="top:223px;font-size:8.2px;line-height:11.5px;color:#303030;right:500.2px;transform-origin:100% 50%;transform:scaleX(0.854);">260</div>
<div style="top:212px;font-size:7.4px;line-height:10.4px;color:#2259aa;left:124.4px;transform-origin:0 50%;transform:scaleX(0.904);-webkit-text-stroke:0.12px #2259aa;">Akt. stav tach.</div>
<div style="top:223px;font-size:8.2px;line-height:11.5px;color:#303030;right:430.3px;transform-origin:100% 50%;transform:scaleX(0.854);">260</div>
<div style="top:237px;font-size:7.4px;line-height:10.4px;color:#2259aa;left:54.8px;transform-origin:0 50%;transform:scaleX(0.872);-webkit-text-stroke:0.12px #2259aa;">Dat. výroby</div>
<div style="top:248px;font-size:8.2px;line-height:11.5px;color:#303030;right:511px;transform-origin:100% 50%;transform:scaleX(0.854);">15.3.2011</div>
<div style="top:237px;font-size:7.4px;line-height:10.4px;color:#2259aa;left:124.4px;transform-origin:0 50%;transform:scaleX(0.872);-webkit-text-stroke:0.12px #2259aa;">Dátum prvej regi...</div>
<div style="top:248px;font-size:8.2px;line-height:11.5px;color:#303030;right:441.1px;transform-origin:100% 50%;transform:scaleX(0.854);">0.0.0000</div>
<div style="top:262px;font-size:7.4px;line-height:10.4px;color:#2259aa;left:54.8px;transform-origin:0 50%;transform:scaleX(0.872);-webkit-text-stroke:0.12px #2259aa;">Dát. zaradenia</div>
<div style="top:273px;font-size:8.2px;line-height:11.5px;color:#303030;right:511px;transform-origin:100% 50%;transform:scaleX(0.854);">1.8.2004</div>
<div style="top:262px;font-size:7.4px;line-height:10.4px;color:#2259aa;left:124.4px;transform-origin:0 50%;transform:scaleX(0.872);-webkit-text-stroke:0.12px #2259aa;">Dat. vyradenia</div>
<div style="top:273px;font-size:8.2px;line-height:11.5px;color:#303030;right:441.1px;transform-origin:100% 50%;transform:scaleX(0.854);">0.0.0000</div>
<div style="top:315px;font-size:7.2px;line-height:10.1px;color:#111;left:-16.45px;width:200px;text-align:center;transform-origin:50% 50%;transform:scaleX(0.916);-webkit-text-stroke:0.04px #111;">Odstávky</div>
<div style="top:315px;font-size:7.2px;line-height:10.1px;color:#111;left:53.5px;width:200px;text-align:center;transform-origin:50% 50%;transform:scaleX(0.917);-webkit-text-stroke:0.04px #111;">IoT Senzory</div>
<div style="top:171px;font-size:8px;line-height:11.2px;color:#fff;font-weight:bold;left:196.8px;transform-origin:0 50%;transform:scaleX(0.900);-webkit-text-stroke:0.1px #fff;">Technický pr...</div>
<div style="top:187px;font-size:7.4px;line-height:10.4px;color:#2259aa;left:202px;transform-origin:0 50%;transform:scaleX(0.872);-webkit-text-stroke:0.12px #2259aa;">Číslo veľkého TP</div>
<div style="top:212px;font-size:7.4px;line-height:10.4px;color:#2259aa;left:202px;transform-origin:0 50%;transform:scaleX(0.872);-webkit-text-stroke:0.12px #2259aa;">Číslo malého TP</div>
<div style="top:237px;font-size:7.4px;line-height:10.4px;color:#2259aa;left:202px;transform-origin:0 50%;transform:scaleX(0.872);-webkit-text-stroke:0.12px #2259aa;">Koniec platnosti...</div>
<div style="top:248px;font-size:8.2px;line-height:11.5px;color:#303030;right:367.6px;transform-origin:100% 50%;transform:scaleX(0.854);">0.0.0000</div>
<div style="top:262px;font-size:7.4px;line-height:10.4px;color:#2259aa;left:202px;transform-origin:0 50%;transform:scaleX(0.872);-webkit-text-stroke:0.12px #2259aa;">Daň z motorový...</div>
<div style="top:273px;font-size:8.2px;line-height:11.5px;color:#303030;left:199.8px;transform-origin:0 50%;transform:scaleX(0.854);">do 2000</div>
<div style="top:315px;font-size:7.2px;line-height:10.1px;color:#111;left:129.2px;width:200px;text-align:center;transform-origin:50% 50%;transform:scaleX(0.888);-webkit-text-stroke:0.04px #111;">Oslobodenie a zľavy</div>
<div style="top:171px;font-size:8px;line-height:11.2px;color:#fff;font-weight:bold;left:270.5px;transform-origin:0 50%;transform:scaleX(0.919);-webkit-text-stroke:0.1px #fff;">Technické parametre</div>
<div style="top:187px;font-size:7.4px;line-height:10.4px;color:#2259aa;left:276.4px;transform-origin:0 50%;transform:scaleX(0.872);-webkit-text-stroke:0.12px #2259aa;">Palivo</div>
<div style="top:198px;font-size:8.2px;line-height:11.5px;color:#303030;left:273.7px;transform-origin:0 50%;transform:scaleX(0.854);">TOP Q Diesel</div>
<div style="top:212px;font-size:7.4px;line-height:10.4px;color:#2259aa;left:276.4px;transform-origin:0 50%;transform:scaleX(0.872);-webkit-text-stroke:0.12px #2259aa;">Obsah motora</div>
<div style="top:223px;font-size:8.2px;line-height:11.5px;color:#303030;right:277.5px;transform-origin:100% 50%;transform:scaleX(0.854);">1896</div>
<div style="top:237px;font-size:7.4px;line-height:10.4px;color:#2259aa;left:276.4px;transform-origin:0 50%;transform:scaleX(0.872);-webkit-text-stroke:0.12px #2259aa;">Priem. spotreba</div>
<div style="top:248px;font-size:8.2px;line-height:11.5px;color:#303030;right:277.5px;transform-origin:100% 50%;transform:scaleX(0.854);">5,43</div>
<div style="top:262px;font-size:7.4px;line-height:10.4px;color:#2259aa;left:276.4px;transform-origin:0 50%;transform:scaleX(0.872);-webkit-text-stroke:0.12px #2259aa;">Koef. spotreby</div>
<div style="top:273px;font-size:8.2px;line-height:11.5px;color:#303030;right:277.5px;transform-origin:100% 50%;transform:scaleX(0.854);">0,00</div>
<div style="top:187px;font-size:7.4px;line-height:10.4px;color:#2259aa;left:347px;transform-origin:0 50%;transform:scaleX(0.872);-webkit-text-stroke:0.12px #2259aa;">Šírka skrine</div>
<div style="top:198px;font-size:8.2px;line-height:11.5px;color:#303030;right:207px;transform-origin:100% 50%;transform:scaleX(0.854);">1731</div>
<div style="top:212px;font-size:7.4px;line-height:10.4px;color:#2259aa;left:347px;transform-origin:0 50%;transform:scaleX(0.872);-webkit-text-stroke:0.12px #2259aa;">Dĺžka skrine</div>
<div style="top:223px;font-size:8.2px;line-height:11.5px;color:#303030;right:207px;transform-origin:100% 50%;transform:scaleX(0.854);">4613</div>
<div style="top:237px;font-size:7.4px;line-height:10.4px;color:#2259aa;left:347px;transform-origin:0 50%;transform:scaleX(0.872);-webkit-text-stroke:0.12px #2259aa;">Výška skrine</div>
<div style="top:248px;font-size:8.2px;line-height:11.5px;color:#303030;right:207px;transform-origin:100% 50%;transform:scaleX(0.854);">0</div>
<div style="top:262px;font-size:7.4px;line-height:10.4px;color:#2259aa;left:347px;transform-origin:0 50%;transform:scaleX(0.872);-webkit-text-stroke:0.12px #2259aa;">Objem</div>
<div style="top:273px;font-size:8.2px;line-height:11.5px;color:#303030;right:207px;transform-origin:100% 50%;transform:scaleX(0.854);">1,90</div>
<div style="top:287px;font-size:7.4px;line-height:10.4px;color:#2259aa;left:347px;transform-origin:0 50%;transform:scaleX(0.872);-webkit-text-stroke:0.12px #2259aa;">Počet euro palet</div>
<div style="top:298px;font-size:8.2px;line-height:11.5px;color:#303030;right:207px;transform-origin:100% 50%;transform:scaleX(0.854);">0</div>
<div style="top:187px;font-size:7.4px;line-height:10.4px;color:#2259aa;left:418px;transform-origin:0 50%;transform:scaleX(0.872);-webkit-text-stroke:0.12px #2259aa;">Nosnosť</div>
<div style="top:198px;font-size:8.2px;line-height:11.5px;color:#303030;right:136.2px;transform-origin:100% 50%;transform:scaleX(0.854);">0</div>
<div style="top:212px;font-size:7.4px;line-height:10.4px;color:#2259aa;left:418px;transform-origin:0 50%;transform:scaleX(0.872);-webkit-text-stroke:0.12px #2259aa;">Hmotnosť</div>
<div style="top:223px;font-size:8.2px;line-height:11.5px;color:#303030;right:136.2px;transform-origin:100% 50%;transform:scaleX(0.854);">0</div>
<div style="top:237px;font-size:7.4px;line-height:10.4px;color:#2259aa;left:418px;transform-origin:0 50%;transform:scaleX(0.872);-webkit-text-stroke:0.12px #2259aa;">Počet náprav</div>
<div style="top:248px;font-size:8.2px;line-height:11.5px;color:#303030;right:136.2px;transform-origin:100% 50%;transform:scaleX(0.854);">2</div>
<div style="top:262px;font-size:7.4px;line-height:10.4px;color:#2259aa;left:418px;transform-origin:0 50%;transform:scaleX(0.872);-webkit-text-stroke:0.12px #2259aa;">Max. počet osob</div>
<div style="top:273px;font-size:8.2px;line-height:11.5px;color:#303030;right:136.2px;transform-origin:100% 50%;transform:scaleX(0.854);">5</div>
<div style="top:287px;font-size:7.4px;line-height:10.4px;color:#2259aa;left:418px;transform-origin:0 50%;transform:scaleX(0.872);-webkit-text-stroke:0.12px #2259aa;">Druh</div>
<div style="top:298px;font-size:8.2px;line-height:11.5px;color:#303030;left:415.5px;transform-origin:0 50%;transform:scaleX(0.729);">PR</div>
<div style="top:298px;font-size:8.2px;line-height:11.5px;color:#2259aa;left:426.5px;transform-origin:0 50%;transform:scaleX(0.876);">Primárne v...</div>
<div style="top:315px;font-size:7.2px;line-height:10.1px;color:#111;left:188.35px;width:200px;text-align:center;transform-origin:50% 50%;transform:scaleX(0.917);-webkit-text-stroke:0.04px #111;">Osádka</div>
<div style="top:315px;font-size:7.2px;line-height:10.1px;color:#111;left:223.65px;width:200px;text-align:center;transform-origin:50% 50%;transform:scaleX(0.917);-webkit-text-stroke:0.04px #111;">Kódy</div>
<div style="top:315px;font-size:7.2px;line-height:10.1px;color:#111;left:276.65px;width:200px;text-align:center;transform-origin:50% 50%;transform:scaleX(0.939);-webkit-text-stroke:0.04px #111;">Pripojené vozidlá</div>
<div style="top:315px;font-size:7.2px;line-height:10.1px;color:#111;left:347.35px;width:200px;text-align:center;transform-origin:50% 50%;transform:scaleX(0.955);-webkit-text-stroke:0.04px #111;">Merné jednotky</div>
<div style="top:336px;font-size:6.8px;line-height:9.5px;color:#fff;font-weight:bold;left:61.5px;transform-origin:0 50%;transform:scaleX(0.919);-webkit-text-stroke:0.1px #fff;">Komentáre (0)</div>
<div style="top:336px;font-size:6.7px;line-height:9.4px;color:#fff;left:122.6px;transform-origin:0 50%;transform:scaleX(1.012);-webkit-text-stroke:0.1px #fff;">Obchodný text ( )</div>
<div style="top:336px;font-size:6.7px;line-height:9.4px;color:#fff;left:196px;transform-origin:0 50%;transform:scaleX(1.004);-webkit-text-stroke:0.1px #fff;">Interný text ( )</div>
<div style="top:336px;font-size:6.7px;line-height:9.4px;color:#fff;left:259.5px;transform-origin:0 50%;transform:scaleX(0.922);-webkit-text-stroke:0.1px #fff;">Servisované zariadenia (0)</div>
<div style="top:354px;font-size:6.8px;line-height:9.5px;color:#2a5aa6;left:69.6px;transform-origin:0 50%;transform:scaleX(0.912);-webkit-text-stroke:0.1px #2a5aa6;">Typ</div>
<div style="top:354px;font-size:6.8px;line-height:9.5px;color:#2a5aa6;left:144.7px;transform-origin:0 50%;transform:scaleX(0.912);-webkit-text-stroke:0.1px #2a5aa6;">Názov</div>
<div style="top:354px;font-size:6.8px;line-height:9.5px;color:#2a5aa6;left:292.4px;transform-origin:0 50%;transform:scaleX(0.912);-webkit-text-stroke:0.1px #2a5aa6;">Komentár 100</div>
<div style="top:354px;font-size:6.8px;line-height:9.5px;color:#2a5aa6;left:441.6px;transform-origin:0 50%;transform:scaleX(0.912);-webkit-text-stroke:0.1px #2a5aa6;">Poradie</div>
<div style="top:390px;font-size:7px;line-height:9.8px;color:#111;left:160.5px;width:200px;text-align:center;transform-origin:50% 50%;transform:scaleX(1.062);-webkit-text-stroke:0.1px #111;">Žiadne údaje</div>
<div style="top:25px;font-size:11.5px;line-height:16.1px;color:#fff;left:500px;transform-origin:0 50%;transform:scaleX(0.918);-webkit-text-stroke:0.05px #fff;">IL-187BX</div>
<div style="top:48px;font-size:7.8px;line-height:10.9px;color:#fff;font-weight:bold;left:500.4px;transform-origin:0 50%;transform:scaleX(0.948);-webkit-text-stroke:0.1px #fff;">Základné informácie</div>
<div style="top:63px;font-size:6.8px;line-height:9.5px;color:#2259aa;left:502.3px;transform-origin:0 50%;transform:scaleX(0.963);-webkit-text-stroke:0.05px #2259aa;">Číslo</div>
<div style="top:63px;font-size:6.8px;line-height:9.5px;color:#111;right:5px;transform-origin:100% 50%;transform:scaleX(0.956);-webkit-text-stroke:0.03px #111;">5</div>
<div style="top:75px;font-size:6.8px;line-height:9.5px;color:#2259aa;left:502.3px;transform-origin:0 50%;transform:scaleX(0.963);-webkit-text-stroke:0.05px #2259aa;">Skratka 1</div>
<div style="top:75px;font-size:6.8px;line-height:9.5px;color:#111;right:5px;transform-origin:100% 50%;transform:scaleX(0.956);-webkit-text-stroke:0.03px #111;">IL-187BX</div>
<div style="top:88px;font-size:6.8px;line-height:9.5px;color:#2259aa;left:502.3px;transform-origin:0 50%;transform:scaleX(0.963);-webkit-text-stroke:0.05px #2259aa;">Skratka 2</div>
<div style="top:100px;font-size:6.8px;line-height:9.5px;color:#2259aa;left:502.3px;transform-origin:0 50%;transform:scaleX(0.963);-webkit-text-stroke:0.05px #2259aa;">Tov. značka</div>
<div style="top:100px;font-size:6.8px;line-height:9.5px;color:#111;right:5px;transform-origin:100% 50%;transform:scaleX(0.956);-webkit-text-stroke:0.03px #111;">ŠKODA - TDI</div>
<div style="top:113px;font-size:6.8px;line-height:9.5px;color:#2259aa;left:502.3px;transform-origin:0 50%;transform:scaleX(0.963);-webkit-text-stroke:0.05px #2259aa;">Typ</div>
<div style="top:113px;font-size:6.8px;line-height:9.5px;color:#111;right:5px;transform-origin:100% 50%;transform:scaleX(0.956);-webkit-text-stroke:0.03px #111;">Osobný</div>
<div style="top:125px;font-size:6.8px;line-height:9.5px;color:#2259aa;left:502.3px;transform-origin:0 50%;transform:scaleX(0.963);-webkit-text-stroke:0.05px #2259aa;">Skupina</div>
<div style="top:125px;font-size:6.8px;line-height:9.5px;color:#111;right:5px;transform-origin:100% 50%;transform:scaleX(0.956);-webkit-text-stroke:0.03px #111;">Osobné 1</div>
<div style="top:145px;font-size:7.8px;line-height:10.9px;color:#fff;font-weight:bold;left:500.4px;transform-origin:0 50%;transform:scaleX(0.979);-webkit-text-stroke:0.1px #fff;">Ostatné údaje</div>
<div style="top:159px;font-size:6.8px;line-height:9.5px;color:#2259aa;left:502.3px;transform-origin:0 50%;transform:scaleX(0.963);-webkit-text-stroke:0.05px #2259aa;">Ukončenie jazdy:</div>
<div style="top:159px;font-size:6.8px;line-height:9.5px;color:#2259aa;right:5px;transform-origin:100% 50%;transform:scaleX(0.926);-webkit-text-stroke:0.03px #2259aa;">0.0.0000</div>
<div style="top:172px;font-size:6.8px;line-height:9.5px;color:#2259aa;left:502.3px;transform-origin:0 50%;transform:scaleX(0.963);-webkit-text-stroke:0.05px #2259aa;">Vytvoril:</div>
<div style="top:172px;font-size:6.8px;line-height:9.5px;color:#2259aa;right:5px;transform-origin:100% 50%;transform:scaleX(0.926);-webkit-text-stroke:0.03px #2259aa;">00.00.0000 00:00:00</div>
<div style="top:185px;font-size:6.8px;line-height:9.5px;color:#2259aa;left:502.3px;transform-origin:0 50%;transform:scaleX(0.963);-webkit-text-stroke:0.05px #2259aa;">Zmenil:</div>
<div style="top:185px;font-size:6.8px;line-height:9.5px;color:#111;right:5px;transform-origin:100% 50%;transform:scaleX(0.926);-webkit-text-stroke:0.03px #111;">K2 12.12.2014 14:24:31</div>
<div style="top:205px;font-size:7.8px;line-height:10.9px;color:#fff;font-weight:bold;left:500.4px;transform-origin:0 50%;transform:scaleX(0.929);-webkit-text-stroke:0.1px #fff;">Obrázok</div>
</body></html>
